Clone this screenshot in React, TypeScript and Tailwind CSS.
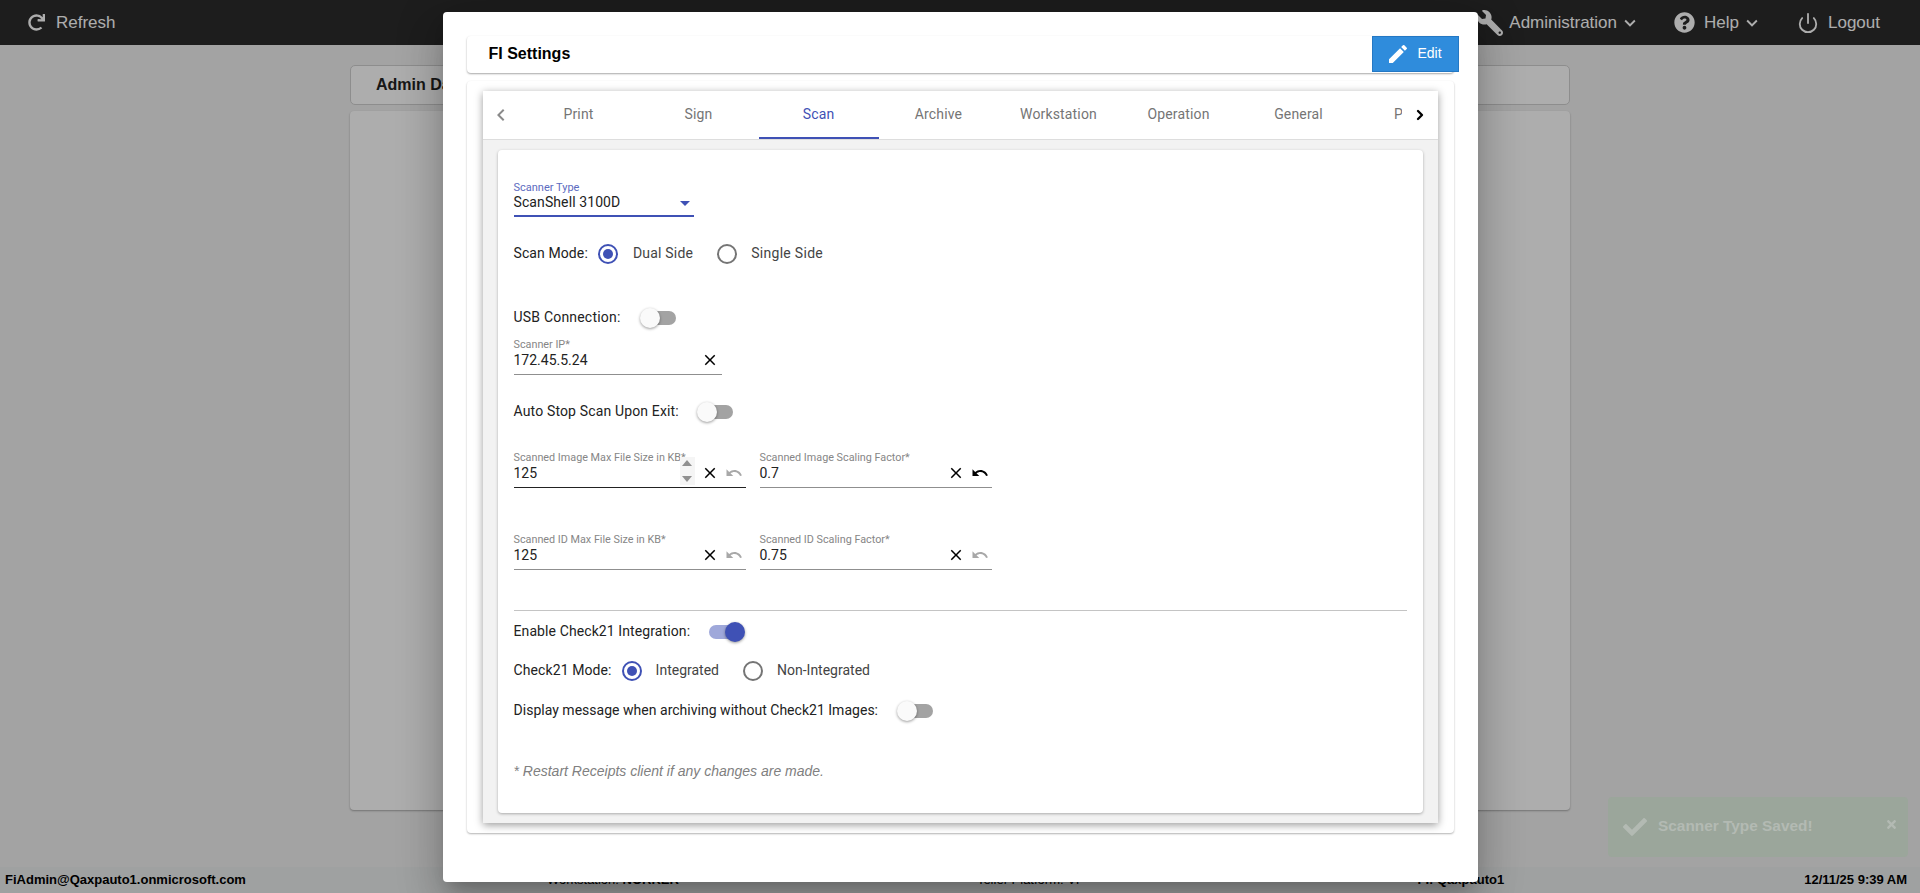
import {
  MdArrowDropDown,
  MdChevronLeft,
  MdClose,
  MdEdit,
  MdKeyboardArrowDown,
  MdUndo,
} from "react-icons/md";
import { FaCheck, FaQuestionCircle, FaRedo, FaTimes, FaWrench } from "react-icons/fa";
import { FiPower } from "react-icons/fi";
import { ChevronRight } from "lucide-react";

const tabs = ["Print", "Sign", "Scan", "Archive", "Workstation", "Operation", "General", "Profiles"];

function Radio({ checked }: { checked?: boolean }) {
  return (
    <span
      className={`flex h-5 w-5 shrink-0 items-center justify-center rounded-full border-2 ${
        checked ? "border-[#3f51b5]" : "border-[#757575]"
      }`}
    >
      {checked && <span className="h-[10px] w-[10px] rounded-full bg-[#3f51b5]" />}
    </span>
  );
}

function Switch({ on, className }: { on?: boolean; className: string }) {
  return (
    <span className={`relative block h-5 shrink-0 ${className}`}>
      <span
        className={`absolute left-[2px] top-[3px] h-[14px] w-[34px] rounded-full ${
          on ? "bg-[#9fa8da]" : "bg-[#a3a3a3]"
        }`}
      />
      <span
        className={`absolute top-0 h-5 w-5 rounded-full shadow-[0_1px_3px_rgba(0,0,0,0.4)] ${
          on ? "right-0 bg-[#3f51b5]" : "left-0 bg-[#fafafa]"
        }`}
      />
    </span>
  );
}

function Field({
  label,
  value,
  width,
  undo,
  focused,
  spinner,
}: {
  label: string;
  value: string;
  width: string;
  undo?: "on" | "off";
  focused?: boolean;
  spinner?: boolean;
}) {
  return (
    <div
      className={`relative flex h-9 flex-col border-b ${width} ${
        focused ? "border-[#222222]" : "border-[#8f8f8f]"
      }`}
    >
      <div className="h-[11px] whitespace-nowrap text-[10.8px] leading-3 text-[#868686]">{label}</div>
      <div className="flex h-5 items-center">
        <span className="flex-1 text-[14px] leading-5 text-[#222222]">{value}</span>
        <span className="flex w-6 justify-center text-black">
          <MdClose size={18} />
        </span>
        {undo && (
          <span className={`flex w-6 justify-center ${undo === "on" ? "text-black" : "text-[#a8a8a8]"}`}>
            <MdUndo size={18} />
          </span>
        )}
      </div>
      {spinner && (
        <span className="absolute right-[51px] top-[5px] flex h-[28px] w-[15px] flex-col items-center justify-between bg-[#f5f5f5] py-[3px]">
          <span className="h-0 w-0 border-x-[5px] border-b-[6px] border-x-transparent border-b-[#909090]" />
          <span className="h-0 w-0 border-x-[5px] border-t-[6px] border-x-transparent border-t-[#909090]" />
        </span>
      )}
    </div>
  );
}

function NavItem({ icon, label, chevron }: { icon: React.ReactNode; label: string; chevron?: boolean }) {
  return (
    <div className="flex items-center">
      {icon}
      <span className="text-[17px]">{label}</span>
      {chevron && <MdKeyboardArrowDown size={22} className="ml-[2px]" />}
    </div>
  );
}

function ScanForm() {
  return (
    <div className="mx-[15px] mb-[10px] mt-[10px] flex flex-1 flex-col rounded-[4px] bg-white pl-4 pr-4 pt-[31px] font-['Roboto',sans-serif] text-[14px] text-[#222222] shadow-[0_1px_3px_rgba(0,0,0,0.3)]">
      <div className="flex h-9 w-[180px] flex-col border-b-2 border-[#3f51b5]">
        <div className="h-[13px] pt-px text-[11px] leading-3 text-[#5c6bc0]">Scanner Type</div>
        <div className="-mt-px flex h-5 items-center justify-between tracking-[0.1px]">
          <span>ScanShell 3100D</span>
          <MdArrowDropDown size={24} className="-mr-[3px] text-[#3f51b5]" />
        </div>
      </div>

      <div className="mt-[25px] flex h-6 items-center">
        <span className="tracking-[0.1px]">Scan Mode:</span>
        <span className="ml-[10px]">
          <Radio checked />
        </span>
        <span className="ml-[15px] tracking-[0.2px] text-[#444444]">Dual Side</span>
        <span className="ml-6">
          <Radio />
        </span>
        <span className="ml-[14px] tracking-[0.3px] text-[#444444]">Single Side</span>
      </div>

      <div className="mt-10 flex h-6 items-center">
        <span className="tracking-[0.2px]">USB Connection:</span>
        <Switch className="ml-[19px] w-9" />
      </div>

      <div className="mt-[9px]">
        <Field label="Scanner IP*" value="172.45.5.24" width="w-[208px]" />
      </div>

      <div className="mt-[25px] flex h-6 items-center">
        <span className="tracking-[0.15px]">Auto Stop Scan Upon Exit:</span>
        <Switch className="ml-[18px] w-9" />
      </div>

      <div className="mt-[28px] flex gap-[14px]">
        <Field label="Scanned Image Max File Size in KB*" value="125" width="w-[232px]" undo="off" focused spinner />
        <Field label="Scanned Image Scaling Factor*" value="0.7" width="w-[232px]" undo="on" />
      </div>

      <div className="mt-[46px] flex gap-[14px]">
        <Field label="Scanned ID Max File Size in KB*" value="125" width="w-[232px]" undo="off" />
        <Field label="Scanned ID Scaling Factor*" value="0.75" width="w-[232px]" undo="off" />
      </div>

      <div className="mt-10 h-px bg-[#c4c4c4]" />

      <div className="mt-[9px] flex h-6 items-center">
        <span className="tracking-[0.1px]">Enable Check21 Integration:</span>
        <Switch on className="ml-[17px] w-[38px]" />
      </div>

      <div className="mt-[15px] flex h-6 items-center">
        <span className="tracking-[0.1px]">Check21 Mode:</span>
        <span className="ml-[10px]">
          <Radio checked />
        </span>
        <span className="ml-[14px] text-[#444444]">Integrated</span>
        <span className="ml-6">
          <Radio />
        </span>
        <span className="ml-[14px] text-[#444444]">Non-Integrated</span>
      </div>

      <div className="mt-4 flex h-6 items-center">
        <span className="tracking-[0.02px]">Display message when archiving without Check21 Images:</span>
        <Switch className="ml-[19px] w-9" />
      </div>

      <div className="mt-[38px] h-5 font-['Liberation_Sans',sans-serif] text-[14px] italic leading-5 text-[#808080]">
        * Restart Receipts client if any changes are made.
      </div>
    </div>
  );
}

function SettingsModal() {
  return (
    <div className="absolute inset-0 flex items-center justify-center bg-black/[0.32]">
      <div className="flex h-[870px] w-[1035px] flex-col rounded-[4px] bg-white pl-6 pt-6 shadow-[0_11px_15px_-7px_rgba(0,0,0,0.2),0_24px_38px_3px_rgba(0,0,0,0.14),0_9px_46px_8px_rgba(0,0,0,0.12)]">
        <div className="flex h-[37px] w-[987px] items-start justify-between rounded-[4px] pl-[22px] shadow-[0_1px_2px_rgba(0,0,0,0.35)]">
          <h1 className="mt-[8px] font-['Liberation_Sans',sans-serif] text-[16px] font-bold leading-5 text-black">FI Settings</h1>
          <button className="-mr-[5px] flex h-9 w-[87px] items-center border border-[#2478c4] bg-[#2f8cdc] pl-[13px] font-['Liberation_Sans',sans-serif] text-[14px] text-white">
            <MdEdit size={24} />
            <span className="ml-[8px]">Edit</span>
          </button>
        </div>

        <div className="mt-2 flex h-[752px] w-[987px] flex-col rounded-[4px] px-4 py-[10px] shadow-[0_1px_2px_rgba(0,0,0,0.3)]">
          <div className="flex flex-1 flex-col bg-[#f2f2f2] shadow-[0_2px_8px_rgba(0,0,0,0.4)]">
            <div className="flex h-[49px] shrink-0 items-stretch border-b border-[#dddddd] bg-white font-['Roboto',sans-serif] text-[14px]">
              <span className="flex w-9 shrink-0 items-center justify-center text-[#8a8a8a]">
                <MdChevronLeft size={24} />
              </span>
              <div className="flex min-w-0 flex-1 overflow-hidden">
                {tabs.map((tab) => (
                  <div
                    key={tab}
                    className={`flex w-[120px] shrink-0 items-center justify-center border-b-2 pt-[2px] tracking-[0.15px] ${
                      tab === "Scan" ? "border-[#3f51b5] text-[#3f51b5]" : "border-transparent text-[#757575]"
                    }`}
                  >
                    {tab}
                  </div>
                ))}
              </div>
              <span className="flex w-9 shrink-0 items-center justify-center text-black">
                <ChevronRight size={16} strokeWidth={3.5} />
              </span>
            </div>
            <ScanForm />
          </div>
        </div>
      </div>
    </div>
  );
}

export default function App() {
  return (
    <div className="relative flex h-[893px] flex-col overflow-hidden bg-[#f0f0f0] font-['Liberation_Sans',sans-serif]">
      <header className="flex h-[45px] shrink-0 items-center justify-between bg-[#2c2c2c] pl-[28px] pr-[40px] text-white">
        <NavItem icon={<FaRedo size={17} className="mr-[11px]" />} label="Refresh" />
        <div className="flex items-center">
          <NavItem
            icon={<FaWrench size={26} className="mr-[6px] -scale-x-100" />}
            label="Administration"
            chevron
          />
          <div className="ml-[33px]">
            <NavItem icon={<FaQuestionCircle size={21} className="mr-[9px]" />} label="Help" chevron />
          </div>
          <div className="ml-[34px]">
            <NavItem icon={<FiPower size={22} className="mr-[9px]" />} label="Logout" />
          </div>
        </div>
      </header>

      <main className="flex flex-1 flex-col px-[350px] pt-5">
        <div className="flex h-10 items-center rounded-[5px] border border-[#d0d0d0] bg-white pl-[25px] text-[16px] font-bold text-[#222222]">
          Admin Dashboard
        </div>
        <div className="mt-[6px] h-[699px] rounded-[4px] bg-white shadow-[0_1px_2px_rgba(0,0,0,0.3)]" />
      </main>

      <footer className="flex h-[26px] shrink-0 items-center bg-[#eaeded] pl-[5px] text-[13px] text-black">
        <span className="font-bold">FiAdmin@Qaxpauto1.onmicrosoft.com</span>
        <span className="ml-[301px]">
          Workstation: <span className="font-bold">NORKER</span>
        </span>
        <span className="ml-[298px]">Teller Platform: VI</span>
        <span className="ml-[338px] font-bold">FI: Qaxpauto1</span>
        <span className="ml-[300px] font-bold">12/11/25 9:39 AM</span>
      </footer>

      <SettingsModal />

      <div className="absolute left-[1608px] top-[797px] flex h-[60px] w-[300px] items-center rounded-[4px] bg-[#9ba69b] pl-[15px] text-[#b3bab3]">
        <FaCheck size={24} />
        <span className="mb-[3px] ml-[11px] flex-1 text-[15.4px] font-bold">Scanner Type Saved!</span>
        <FaTimes size={13} className="mb-[6px] mr-[10px]" />
      </div>
    </div>
  );
}
